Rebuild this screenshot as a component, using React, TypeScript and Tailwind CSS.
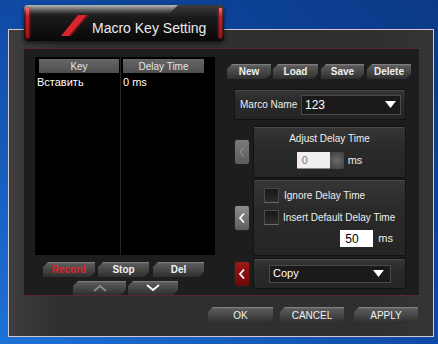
import { ReactNode } from "react";

const cut =
  "[clip-path:polygon(5px_0,100%_0,100%_calc(100%_-_5px),calc(100%_-_5px)_100%,0_100%,0_5px)]";

function SkinButton({
  children,
  className = "",
  red = false,
}: {
  children: ReactNode;
  className?: string;
  red?: boolean;
}) {
  return (
    <div
      className={`flex items-center justify-center bg-[linear-gradient(180deg,#8a8a8a_0%,#5a5a5a_12%,#454545_55%,#2e2e2e_100%)] ${cut} ${
        red ? "text-[#e0222a]" : "text-[#f0f0f0]"
      } ${className}`}
    >
      {children}
    </div>
  );
}

function SideButton({ tone }: { tone: "dim" | "gray" | "red" }) {
  let bg = "bg-[linear-gradient(180deg,#7a7a7a,#5c5c5c)]";
  if (tone === "gray") bg = "bg-[linear-gradient(180deg,#8d8d8d,#5e5e5e)]";
  if (tone === "red") bg = "bg-[linear-gradient(180deg,#a01818,#6a0808)]";
  return (
    <div
      className={`flex h-[26px] w-[16px] items-center justify-center rounded-[3px] border border-[#222] ${bg}`}
    >
      <svg width="8" height="12" viewBox="0 0 8 12">
        <polyline
          points="6,1.5 2,6 6,10.5"
          fill="none"
          stroke={tone === "dim" ? "#888" : "#fff"}
          strokeWidth={tone === "dim" ? 1.2 : 1.8}
        />
      </svg>
    </div>
  );
}

function Triangle() {
  return (
    <svg width="11" height="7" viewBox="0 0 11 7">
      <polygon points="0,0 11,0 5.5,7" fill="#fff" />
    </svg>
  );
}

function Chevron({ up, color }: { up?: boolean; color: string }) {
  return (
    <svg width="14" height="8" viewBox="0 0 14 8">
      <polyline
        points={up ? "1,7 7,2 13,7" : "1,1 7,6 13,1"}
        fill="none"
        stroke={color}
        strokeWidth="1.8"
      />
    </svg>
  );
}

function Checkbox() {
  return (
    <div className="h-[15px] w-[15px] shrink-0 border border-[#4a4a4a] border-b-[#6a6a6a] bg-[linear-gradient(180deg,#161616,#2e2e2e)]" />
  );
}

const panel =
  "rounded-[2px] border border-[#121212] bg-[linear-gradient(180deg,#363636,#2a2a2a_40%,#252525)] shadow-[inset_0_1px_0_#4a4a4a]";

export default function App() {
  return (
    <div className="relative h-[344px] w-[438px] overflow-hidden bg-[linear-gradient(to_bottom_left,#0a3987_0%,#0f4aa4_50%,#1d72d8_100%)] pl-[8px] pt-[29px] font-['Liberation_Sans',Arial,sans-serif] text-[10px] text-[#eeeeee]">
      {/* title tab */}
      <div className="absolute left-[24px] top-[5px] z-10 h-[36px] w-[200px] overflow-hidden rounded-[4px] bg-[linear-gradient(180deg,#3c3c3c_0%,#1a1a1a_35%,#080808_100%)] shadow-[0_2px_4px_rgba(0,0,0,0.6)]">
        <div className="absolute left-0 top-0 h-[9px] w-[154px] bg-[linear-gradient(180deg,#b8b8b8,#5a5a5a_60%,transparent)] [clip-path:polygon(0_0,100%_0,calc(100%_-_9px)_100%,0_100%)]" />
        <div className="absolute bottom-[3px] left-[2px] top-[3px] w-[3px] bg-[linear-gradient(180deg,#ff6a6a,#c81c24_30%,#9a1218)] shadow-[0_0_3px_#e02a30]" />
        <div className="absolute bottom-[3px] right-[2px] top-[3px] w-[3px] bg-[linear-gradient(180deg,#ff6a6a,#c81c24_30%,#9a1218)] shadow-[0_0_3px_#e02a30]" />
        <svg
          className="absolute left-0 top-0"
          width="200"
          height="36"
          viewBox="0 0 200 36"
        >
          <polygon points="37,31 45,31 63,10 54,10" fill="#d8262e" />
          <polygon points="45,31 47,31 65,10 63,10" fill="#7a1016" />
        </svg>
        <div className="absolute left-[68px] top-[15px] text-[14px] leading-[16px] text-[#ececec]">
          Macro Key Setting
        </div>
      </div>

      {/* window */}
      <div className="h-[308px] w-[426px] border border-[#d8c4cc] bg-[linear-gradient(90deg,#3e3e3e_0%,#303030_12%,#2f2f2f_85%,#353535_100%)] pl-[14px] pt-[18px]">
        <div className="flex h-[248px] w-[397px] border border-[#56292d] bg-[#1d1d1d]">
          {/* left column */}
          <div className="ml-[11px] mt-[8px] flex w-[180px] flex-col">
            <div className="flex h-[199px] bg-black">
              <div className="flex w-[86px] flex-col border-r border-[#262626]">
                <div className="ml-[4px] mt-[2px] flex h-[14px] w-[80px] items-center justify-center bg-[linear-gradient(180deg,#666,#4e4e4e)] text-[#e4e4e4]">
                  Key
                </div>
                <div className="ml-[2px] mt-[3px] text-[11px] leading-[13px] text-white">
                  Вставить
                </div>
              </div>
              <div className="flex flex-col">
                <div className="ml-[2px] mt-[2px] flex h-[14px] w-[81px] items-center justify-center bg-[linear-gradient(180deg,#666,#4e4e4e)] text-[#e4e4e4]">
                  Delay Time
                </div>
                <div className="ml-[2px] mt-[3px] text-[11px] leading-[13px] text-white">
                  0 ms
                </div>
              </div>
            </div>
            <div className="ml-[8px] mt-[7px] flex h-[15px] font-bold">
              <SkinButton red className="w-[52px]">
                Record
              </SkinButton>
              <SkinButton className="ml-[3px] w-[51px]">Stop</SkinButton>
              <SkinButton className="ml-[4px] w-[51px]">Del</SkinButton>
            </div>
            <div className="ml-[38px] mt-[4px] flex h-[14px]">
              <SkinButton className="w-[53px]">
                <Chevron up color="#8a8a8a" />
              </SkinButton>
              <SkinButton className="ml-[2px] w-[50px]">
                <Chevron color="#ffffff" />
              </SkinButton>
            </div>
          </div>

          {/* right column */}
          <div className="ml-[12px] mt-[15px] flex w-[184px] flex-col">
            <div className="flex h-[15px] font-bold">
              <SkinButton className="w-[44px]">New</SkinButton>
              <SkinButton className="ml-[2px] w-[45px]">Load</SkinButton>
              <SkinButton className="ml-[3px] w-[43px]">Save</SkinButton>
              <SkinButton className="ml-[3px] w-[44px]">Delete</SkinButton>
            </div>

            <div
              className={`ml-[7px] mt-[10px] flex h-[31px] w-[172px] items-center pl-[5px] ${panel}`}
            >
              <span className="w-[61px]">Marco Name</span>
              <div className="flex h-[20px] w-[100px] items-center justify-between border border-[#4a4a4a] bg-[#1a1a1a] pl-[3px] pr-[4px] text-[12px] text-white">
                <span>123</span>
                <Triangle />
              </div>
            </div>

            <div className="ml-[7px] mt-[6px] flex items-center gap-[3px]">
              <SideButton tone="dim" />
              <div
                className={`flex h-[52px] w-[153px] flex-col items-center pt-[6px] ${panel}`}
              >
                <span className="leading-[12px]">Adjust Delay Time</span>
                <div className="mt-[7px] flex h-[17px] items-center">
                  <div className="flex h-[17px] w-[33px] items-center border-b border-[#888] bg-[#efefef] pl-[5px] text-[11px] text-[#777]">
                    0
                  </div>
                  <div className="h-[17px] w-[14px] rounded-[2px] bg-[radial-gradient(circle,#6a6a6a,#3e3e3e)]" />
                  <span className="ml-[4px] text-[11px]">ms</span>
                </div>
              </div>
            </div>

            <div className="ml-[7px] mt-[1px] flex items-center gap-[3px]">
              <SideButton tone="gray" />
              <div
                className={`flex h-[77px] w-[153px] flex-col whitespace-nowrap pl-[10px] pr-[12px] pt-[8px] ${panel}`}
              >
                <div className="flex items-center gap-[5px]">
                  <Checkbox />
                  <span>Ignore Delay Time</span>
                </div>
                <div className="mt-[7px] flex items-center gap-[4px]">
                  <Checkbox />
                  <span>Insert Default Delay Time</span>
                </div>
                <div className="mt-[5px] flex items-center justify-end gap-[5px]">
                  <div className="flex h-[17px] w-[33px] items-center bg-white pl-[5px] text-[12px] text-black">
                    50
                  </div>
                  <span className="text-[11px]">ms</span>
                </div>
              </div>
            </div>

            <div className="ml-[7px] mt-[2px] flex items-center gap-[3px]">
              <SideButton tone="red" />
              <div
                className={`flex h-[31px] w-[153px] items-center pl-[15px] ${panel}`}
              >
                <div className="flex h-[18px] w-[122px] items-center justify-between border border-[#4a4a4a] bg-[#1a1a1a] pl-[3px] pr-[6px] text-[11px] text-white">
                  <span>Copy</span>
                  <Triangle />
                </div>
              </div>
            </div>
          </div>
        </div>

        {/* bottom buttons */}
        <div className="ml-[185px] mt-[11px] flex h-[16px] text-[10px]">
          <SkinButton className="w-[65px]">OK</SkinButton>
          <SkinButton className="ml-[7px] w-[64px]">CANCEL</SkinButton>
          <SkinButton className="ml-[10px] w-[64px]">APPLY</SkinButton>
        </div>
      </div>
    </div>
  );
}
